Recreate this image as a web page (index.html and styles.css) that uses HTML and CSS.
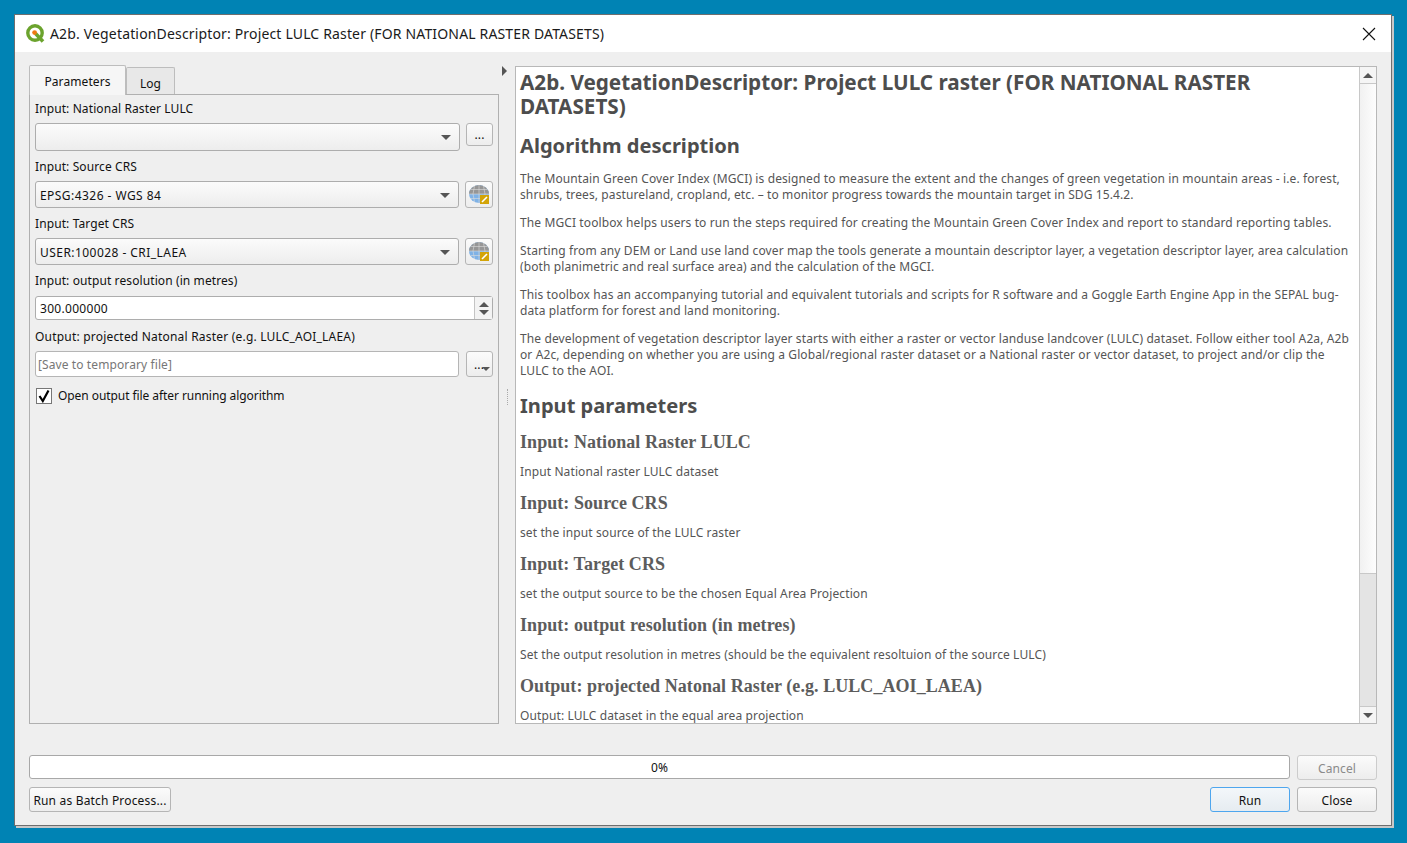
FILE: index.html
```html
<!DOCTYPE html>
<html>
<head>
  <meta charset="utf-8">
  <title>A2b. VegetationDescriptor</title>
  <link rel="stylesheet" href="styles.css">
</head>
<body>
  <div class="window">
    <div class="titlebar">
      <svg class="qgis-logo" width="21" height="21" viewBox="0 0 21 21">
        <circle cx="10" cy="10" r="7.2" fill="none" stroke="#6ba32d" stroke-width="3.4"/>
        <path d="M10.5 10.5 L18 18.5" stroke="#6ba32d" stroke-width="3.6"/>
        <circle cx="9.6" cy="9.6" r="2.4" fill="#ee7913"/>
      </svg>
      <span class="title-text">A2b. VegetationDescriptor: Project LULC Raster (FOR NATIONAL RASTER DATASETS)</span>
      <svg class="close-x" width="14" height="14" viewBox="0 0 14 14">
        <path d="M1 1 L13 13 M13 1 L1 13" stroke="#111" stroke-width="1.1"/>
      </svg>
    </div>

    <div class="content">
      <div class="main">
        <div class="left">
          <div class="tabs">
            <div class="tab active">Parameters</div>
            <div class="tab">Log</div>
          </div>
          <div class="params">
            <div class="label first">Input: National Raster LULC</div>
            <div class="row">
              <div class="combo tall"><span class="arrow"></span></div>
              <div class="btn small">...</div>
            </div>

            <div class="label">Input: Source CRS</div>
            <div class="row">
              <div class="combo">EPSG:4326 - WGS 84<span class="arrow"></span></div>
              <div class="btn crs">
                <svg width="22" height="22" viewBox="0 0 22 22">
                  <ellipse cx="11" cy="10" rx="10" ry="9" fill="#7fb2e6"/>
                  <path d="M1 10 A10 9 0 0 1 21 10 Z" fill="#969696"/>
                  <path d="M1 10 H21 M3 5.5 H19 M3 14.5 H19 M11 1 V19 M6.5 2 Q3.5 10 6.5 18 M15.5 2 Q18.5 10 15.5 18" stroke="#dcdcdc" stroke-width=".6" fill="none"/>
                  <rect x="12" y="11" width="9" height="9" fill="#d3a408"/>
                  <path d="M14 18 L19 13" stroke="#fff" stroke-width="1.6"/>
                </svg>
              </div>
            </div>

            <div class="label">Input: Target CRS</div>
            <div class="row">
              <div class="combo">USER:100028 - CRI_LAEA<span class="arrow"></span></div>
              <div class="btn crs">
                <svg width="22" height="22" viewBox="0 0 22 22">
                  <ellipse cx="11" cy="10" rx="10" ry="9" fill="#7fb2e6"/>
                  <path d="M1 10 A10 9 0 0 1 21 10 Z" fill="#969696"/>
                  <path d="M1 10 H21 M3 5.5 H19 M3 14.5 H19 M11 1 V19 M6.5 2 Q3.5 10 6.5 18 M15.5 2 Q18.5 10 15.5 18" stroke="#dcdcdc" stroke-width=".6" fill="none"/>
                  <rect x="12" y="11" width="9" height="9" fill="#d3a408"/>
                  <path d="M14 18 L19 13" stroke="#fff" stroke-width="1.6"/>
                </svg>
              </div>
            </div>

            <div class="label">Input: output resolution (in metres)</div>
            <div class="spin">
              <div class="spin-value">300.000000</div>
              <div class="spin-btns"><span class="up"></span><span class="down"></span></div>
            </div>

            <div class="label long">Output: projected Natonal Raster (e.g. LULC_AOI_LAEA)</div>
            <div class="row wide-gap">
              <div class="line-input">[Save to temporary file]</div>
              <div class="btn menu">...<span class="arrow"></span></div>
            </div>

            <div class="check-row">
              <span class="checkbox">
                <svg width="14" height="14" viewBox="0 0 14 14"><path d="M2.5 7 L5.8 12 L11.5 1.5" fill="none" stroke="#000" stroke-width="2.2"/></svg>
              </span>
              Open output file after running algorithm
            </div>
          </div>
        </div>

        <div class="splitter">
          <span class="collapse"></span>
          <span class="grip"></span>
        </div>

        <div class="help">
          <div class="help-text">
            <h1>A2b. VegetationDescriptor: Project LULC raster (FOR NATIONAL RASTER<br>DATASETS)</h1>
            <h2>Algorithm description</h2>
            <p>The Mountain Green Cover Index (MGCI) is designed to measure the extent and the changes of green vegetation in mountain areas - i.e. forest,<br>shrubs, trees, pastureland, cropland, etc. – to monitor progress towards the mountain target in SDG 15.4.2.</p>
            <p>The MGCI toolbox helps users to run the steps required for creating the Mountain Green Cover Index and report to standard reporting tables.</p>
            <p>Starting from any DEM or Land use land cover map the tools generate a mountain descriptor layer, a vegetation descriptor layer, area calculation<br>(both planimetric and real surface area) and the calculation of the MGCI.</p>
            <p>This toolbox has an accompanying tutorial and equivalent tutorials and scripts for R software and a Goggle Earth Engine App in the SEPAL bug-<br>data platform for forest and land monitoring.</p>
            <p>The development of vegetation descriptor layer starts with either a raster or vector landuse landcover (LULC) dataset. Follow either tool A2a, A2b<br>or A2c, depending on whether you are using a Global/regional raster dataset or a National raster or vector dataset, to project and/or clip the<br>LULC to the AOI.</p>
            <h2 class="params-head">Input parameters</h2>
            <h3>Input: National Raster LULC</h3>
            <p>Input National raster LULC dataset</p>
            <h3>Input: Source CRS</h3>
            <p>set the input source of the LULC raster</p>
            <h3>Input: Target CRS</h3>
            <p>set the output source to be the chosen Equal Area Projection</p>
            <h3>Input: output resolution (in metres)</h3>
            <p>Set the output resolution in metres (should be the equivalent resoltuion of the source LULC)</p>
            <h3>Output: projected Natonal Raster (e.g. LULC_AOI_LAEA)</h3>
            <p>Output: LULC dataset in the equal area projection</p>
          </div>
          <div class="scrollbar">
            <div class="sb-btn"><span class="up"></span></div>
            <div class="sb-thumb"></div>
            <div class="sb-track"></div>
            <div class="sb-btn bottom"><span class="down"></span></div>
          </div>
        </div>
      </div>

      <div class="progress-row">
        <div class="progress">0%</div>
        <div class="btn action disabled">Cancel</div>
      </div>
      <div class="button-row">
        <div class="btn batch">Run as Batch Process...</div>
        <div class="spacer"></div>
        <div class="btn action default">Run</div>
        <div class="btn action">Close</div>
      </div>
    </div>
  </div>
</body>
</html>
```

FILE: styles.css
```css
html, body {
  margin: 0;
  height: 100%;
}

body {
  background-color: #0083b4;
  font-family: "Noto Sans", sans-serif;
  font-size: 12px;
  letter-spacing: .1px;
  color: #111;
  padding: 14px 15px 0 14px;
  box-sizing: border-box;
  overflow: hidden;
}

.window {
  width: 1378px;
  height: 812px;
  background-color: #efefef;
  border: 1px solid #6e6e6e;
  box-sizing: border-box;
  box-shadow: 2px 2px 0 #c8c8c8;
  display: flex;
  flex-direction: column;
}

.titlebar {
  height: 37px;
  background-color: white;
  display: flex;
  align-items: center;
  padding-left: 10px;
  padding-right: 15px;
  flex: none;
}

.qgis-logo {
  margin-right: 4px;
}

.title-text {
  font-size: 14px;
  letter-spacing: .16px;
  flex: 1;
  color: #1a1a1a;
}

.content {
  flex: 1;
  padding: 13px 14px 12px 14px;
  display: flex;
  flex-direction: column;
}

.main {
  display: flex;
  height: 659px;
  flex: none;
}

/* left panel */
.left {
  width: 470px;
  display: flex;
  flex-direction: column;
  flex: none;
}

.tabs {
  display: flex;
  align-items: flex-end;
  height: 29px;
  flex: none;
}

.tab {
  height: 27px;
  line-height: 31px;
  width: 49px;
  text-align: center;
  border: 1px solid #bdbdbd;
  border-bottom: none;
  border-radius: 2px 2px 0 0;
  box-sizing: border-box;
  background-color: #e8e8e8;
}

.tab.active {
  height: 30px;
  line-height: 31px;
  width: 97px;
  background-color: #f6f6f6;
  position: relative;
  top: 1px;
  z-index: 1;
}

.params {
  flex: 1;
  border: 1px solid #b0b0b0;
  padding: 0 5px;
}

.label {
  height: 17px;
  line-height: 17px;
  margin-top: 7px;
  margin-bottom: 6px;
}

.label.first {
  margin-top: 5px;
  margin-bottom: 6px;
}

.label.long {
  letter-spacing: .2px;
}

.row {
  display: flex;
  gap: 6px;
  align-items: flex-start;
}

.row.wide-gap {
  gap: 7px;
}

.combo {
  flex: 1;
  height: 27px;
  line-height: 27px;
  letter-spacing: .45px;
  border: 1px solid #adadad;
  border-radius: 3px;
  box-sizing: border-box;
  padding-left: 4px;
  background: linear-gradient(#fbfbfb, #ededed);
  position: relative;
}

.combo.tall {
  height: 28px;
}

.arrow {
  position: absolute;
  right: 8px;
  top: 11px;
  width: 0;
  height: 0;
  border-left: 5px solid transparent;
  border-right: 5px solid transparent;
  border-top: 5px solid #555;
}

.btn {
  border: 1px solid #b5b5b5;
  border-radius: 3px;
  box-sizing: border-box;
  background: linear-gradient(#fbfbfb, #ededed);
  text-align: center;
  position: relative;
}

.btn.small {
  width: 27px;
  height: 23px;
  line-height: 22px;
  flex: none;
}

.btn.crs {
  width: 28px;
  height: 27px;
  flex: none;
  padding: 2px 0 0 2px;
}

.btn.crs svg {
  display: block;
}

.btn.menu {
  width: 27px;
  height: 26px;
  line-height: 26px;
  flex: none;
  text-align: left;
  padding-left: 7px;
}

.btn.menu .arrow {
  right: 2px;
  top: 15px;
  border-left-width: 4px;
  border-right-width: 4px;
  border-top-width: 4px;
}

.spin {
  display: flex;
  height: 24px;
  margin: 7px 0 8px 0;
  border: 1px solid #adadad;
  border-radius: 3px;
  box-sizing: border-box;
  width: 458px;
  background-color: white;
}

.spin-value {
  flex: 1;
  line-height: 23px;
  letter-spacing: .3px;
  padding-left: 4px;
}

.spin-btns {
  width: 17px;
  border-left: 1px solid #c4c4c4;
  background-color: #f3f3f3;
  display: flex;
  flex-direction: column;
  align-items: center;
  justify-content: center;
  gap: 3px;
}

.up {
  display: block;
  width: 0;
  height: 0;
  border-left: 5px solid transparent;
  border-right: 5px solid transparent;
  border-bottom: 5px solid #555;
}

.down {
  display: block;
  width: 0;
  height: 0;
  border-left: 5px solid transparent;
  border-right: 5px solid transparent;
  border-top: 5px solid #555;
}

.line-input {
  flex: 1;
  height: 26px;
  line-height: 25px;
  border: 1px solid #b5b5b5;
  border-radius: 3px;
  box-sizing: border-box;
  padding-left: 2px;
  background-color: white;
  color: #777;
}

.check-row {
  display: flex;
  align-items: center;
  margin-top: 10px;
  height: 17px;
  letter-spacing: -.07px;
}

.checkbox {
  width: 16px;
  height: 16px;
  margin-left: 1px;
  border: 1px solid #777;
  background-color: white;
  box-sizing: border-box;
  margin-right: 6px;
  display: flex;
  align-items: center;
  justify-content: center;
}

/* splitter */
.splitter {
  width: 16px;
  flex: none;
  position: relative;
}

.collapse {
  position: absolute;
  left: 3px;
  top: 1px;
  width: 0;
  height: 0;
  border-top: 5px solid transparent;
  border-bottom: 5px solid transparent;
  border-left: 5px solid #555;
}

.grip {
  position: absolute;
  left: 8px;
  top: 324px;
  height: 16px;
  border-left: 1px dotted #aaa;
}

/* help panel */
.help {
  flex: 1;
  border: 1px solid #b8b8b8;
  background-color: white;
  display: flex;
  overflow: hidden;
  margin-top: 1px;
}

.help-text {
  flex: 1;
  padding: 3px 4px 0 4px;
  color: #555;
  overflow: hidden;
  letter-spacing: .11px;
}

.help-text h1 {
  font-size: 20.7px;
  line-height: 24px;
  font-weight: bold;
  letter-spacing: 0;
  margin: 0 0 15px 0;
  color: #4d4d4d;
}

.help-text h2 {
  font-size: 20.1px;
  line-height: 26px;
  font-weight: bold;
  letter-spacing: 0;
  margin: 0 0 12px 0;
  color: #4d4d4d;
}

.help-text h2.params-head {
  margin-top: 14px;
  margin-bottom: 12px;
}

.help-text h3 {
  font-family: "Liberation Serif", serif;
  font-size: 18px;
  line-height: 22px;
  font-weight: bold;
  letter-spacing: .06px;
  margin: 0 0 11px 0;
  color: #5c5c5c;
}

.help-text p {
  margin: 0 0 12px 0;
  line-height: 16px;
}

.scrollbar {
  width: 17px;
  box-sizing: border-box;
  flex: none;
  border-left: 1px solid #c8c8c8;
  display: flex;
  flex-direction: column;
  background-color: #e4e4e4;
}

.sb-btn {
  height: 16px;
  background-color: #f5f5f5;
  border-bottom: 1px solid #c8c8c8;
  display: flex;
  align-items: center;
  justify-content: center;
  flex: none;
}

.sb-btn.bottom {
  border-top: 1px solid #c8c8c8;
  border-bottom: none;
}

.sb-thumb {
  height: 489px;
  background: linear-gradient(90deg, #f1f1f1, #fdfdfd);
  border-bottom: 1px solid #c8c8c8;
  flex: none;
}

.sb-track {
  flex: 1;
}

/* bottom bar */
.progress-row {
  display: flex;
  margin-top: 31px;
  gap: 7px;
  align-items: flex-start;
}

.progress {
  flex: 1;
  height: 24px;
  line-height: 24px;
  border: 1px solid #a8a8a8;
  border-radius: 3px;
  box-sizing: border-box;
  background-color: white;
  text-align: center;
}

.button-row {
  display: flex;
  margin-top: 7px;
  gap: 7px;
  align-items: center;
}

.spacer {
  flex: 1;
}

.btn.action {
  width: 80px;
  height: 25px;
  line-height: 26px;
}

.btn.batch {
  width: 142px;
  height: 25px;
  line-height: 26px;
  letter-spacing: .18px;
}

.btn.disabled {
  color: #8a8a8a;
  border-color: #cccccc;
}

.btn.default {
  border-color: #4ea6ee;
  background: linear-gradient(#f3f7fa, #e6ecf1);
}
```
